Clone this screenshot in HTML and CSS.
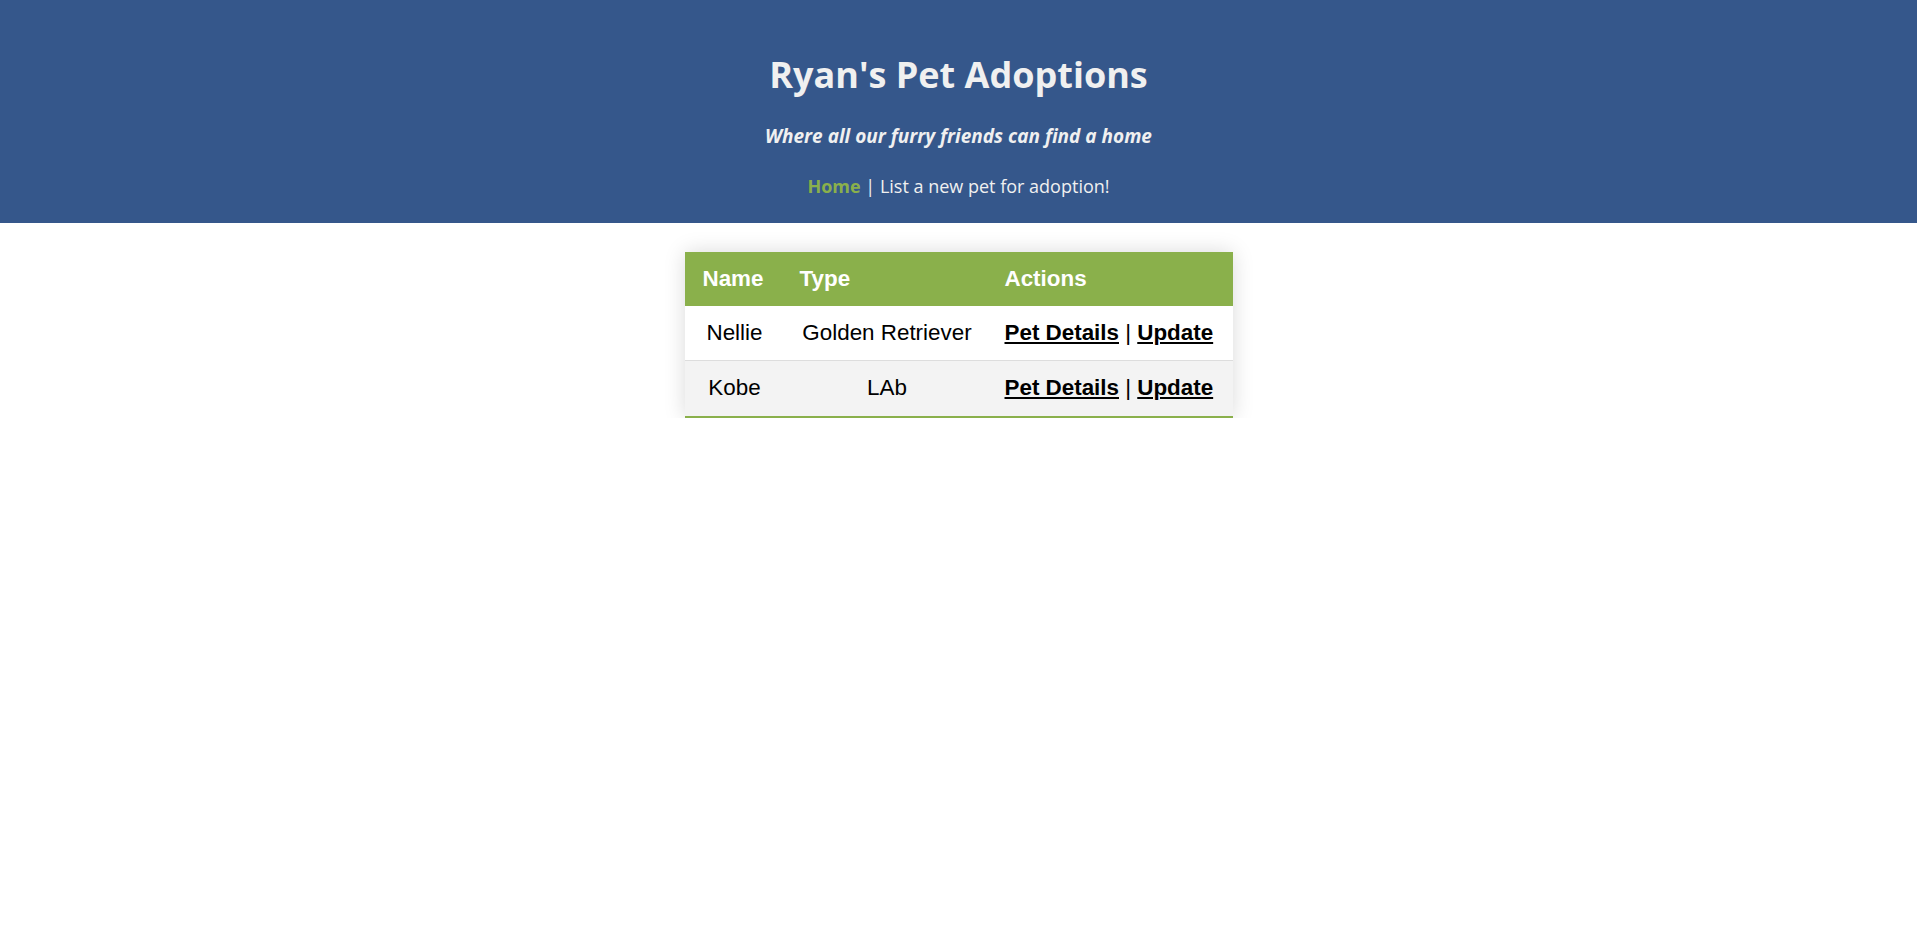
FILE: index.html
```html
<!DOCTYPE html>
<html lang="en">
<head>
<meta charset="utf-8">
<title>Ryan's Pet Adoptions</title>
<link rel="stylesheet" href="styles.css">
</head>
<body>
<header class="site-header">
  <h1 class="title">Ryan's Pet Adoptions</h1>
  <p class="tagline">Where all our furry friends can find a home</p>
  <nav class="nav"><a class="nav-home" href="#">Home</a> | <a class="nav-link" href="#">List a new pet for adoption!</a></nav>
</header>
<main class="content">
  <table class="pets">
    <thead>
      <tr>
        <th class="col-name">Name</th>
        <th class="col-type">Type</th>
        <th class="col-actions">Actions</th>
      </tr>
    </thead>
    <tbody>
      <tr>
        <td>Nellie</td>
        <td>Golden Retriever</td>
        <td class="actions"><a href="#">Pet Details</a> | <a href="#">Update</a></td>
      </tr>
      <tr>
        <td>Kobe</td>
        <td>LAb</td>
        <td class="actions"><a href="#">Pet Details</a> | <a href="#">Update</a></td>
      </tr>
    </tbody>
  </table>
</main>
</body>
</html>
```
FILE: styles.css
```css
html, body {
  margin: 0;
  padding: 0;
  background: #ffffff;
}

.site-header {
  background: #35578b;
  color: #f0f0f0;
  text-align: center;
  font-family: "Open Sans", "Noto Sans", sans-serif;
  padding: 51px 0 24px;
}

.title {
  margin: 0;
  font-size: 36px;
  line-height: 48px;
  font-weight: 700;
}

.tagline {
  margin: 23px 0 0;
  font-size: 19px;
  line-height: 28px;
  font-weight: 700;
  font-style: italic;
}

.nav {
  margin-top: 23px;
  font-size: 18px;
  line-height: 26px;
}

.nav a {
  text-decoration: none;
}

.nav-home {
  color: #8ab04b;
  font-weight: 700;
}

.nav-link {
  color: #f0f0f0;
}

.content {
  padding-top: 29px;
}

.pets {
  margin: 0 auto;
  border-collapse: collapse;
  font-family: "Liberation Sans", Arial, sans-serif;
  font-size: 22.4px;
  line-height: 26px;
  box-shadow: 0 0 20px rgba(0, 0, 0, 0.15);
  border-bottom: 2px solid #8ab04b;
}

.pets th {
  background: #8ab04b;
  color: #ffffff;
  text-align: left;
  font-weight: 700;
  padding: 14px 15px;
}

.pets th.col-name {
  width: 67px;
  padding-left: 18px;
}
.col-type { width: 175px; }
.col-actions { width: 213px; }

.pets td {
  text-align: center;
  color: #000000;
  padding: 14px 15px 14px;
  border-bottom: 1px solid #dddddd;
}

.pets tbody tr:nth-child(even) td {
  background: #f3f3f3;
  border-bottom: none;
  padding-bottom: 15px;
}

.pets td.actions {
  text-align: left;
  white-space: nowrap;
}

.pets td a {
  color: #000000;
  font-weight: 700;
}
```
